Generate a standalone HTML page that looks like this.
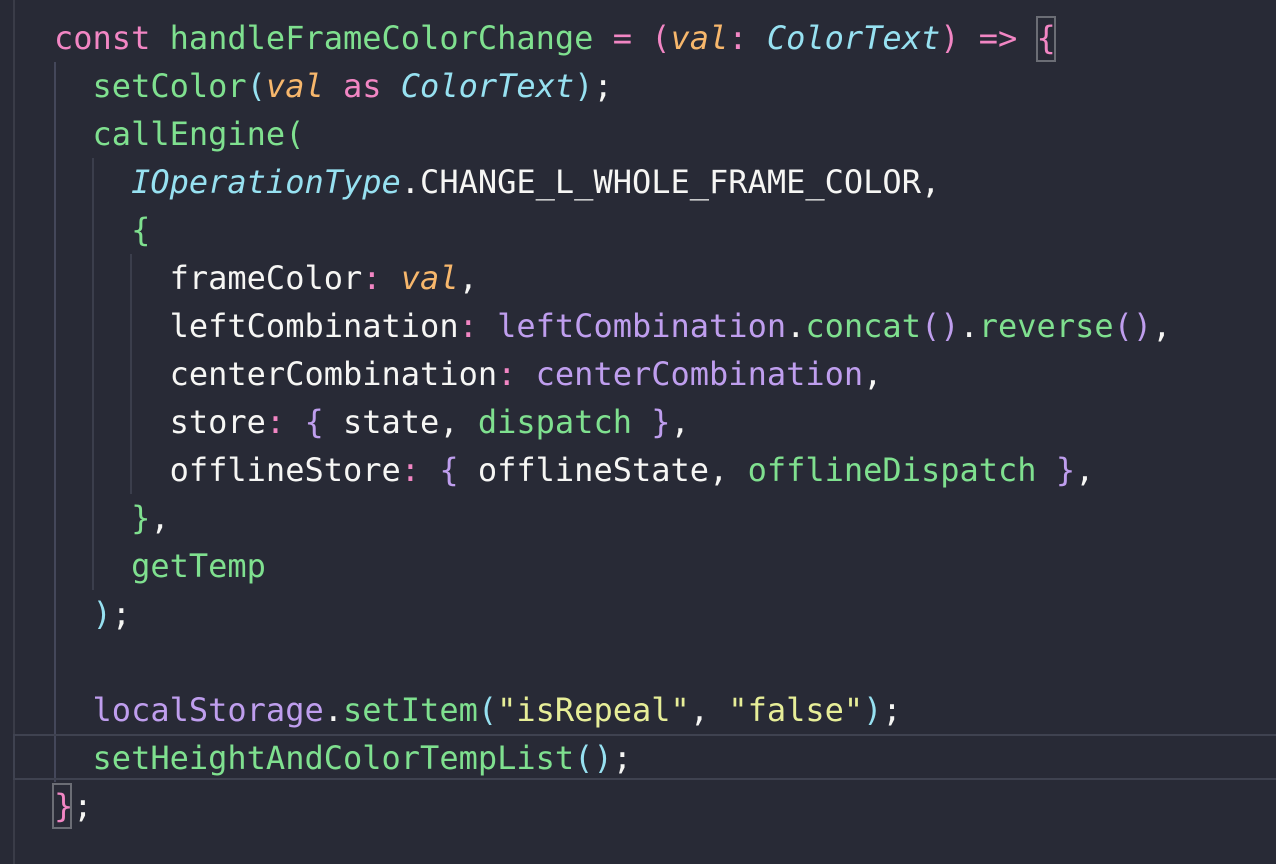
<!DOCTYPE html>
<html><head><meta charset="utf-8"><style>
html,body{margin:0;padding:0}
body{width:1276px;height:864px;background:#282a36;overflow:hidden;position:relative;font-family:"DejaVu Sans Mono","Liberation Mono",monospace;font-size:32px;color:#f6f6f4}
.l{position:absolute;left:54px;height:48px;line-height:48px;white-space:pre}
.p{color:#f286c4}.g{color:#7fe08f}.o{color:#f7b76c;font-style:italic}.c{color:#97e1f1}.ci{color:#97e1f1;font-style:italic}
.v{color:#bf9eee}.y{color:#e7ee98}
.guide{position:absolute;width:2px;background:#3b3e4c}
.box{position:absolute;border:2px solid #6b6d75;box-sizing:border-box}
</style></head><body>
<div class="guide" style="left:13px;top:0;height:864px;background:#3a3c48"></div>
<div class="guide" style="left:54px;top:62px;height:720px;background:#44475a"></div>
<div class="guide" style="left:92px;top:158px;height:432px"></div>
<div class="guide" style="left:130px;top:254px;height:240px"></div>
<div style="position:absolute;left:13px;top:734px;width:1263px;height:46px;border-top:2px solid #3f4250;border-bottom:2px solid #3f4250;box-sizing:border-box;border-left:2px solid #3f4250"></div>
<div class="box" style="left:1036px;top:16px;width:20px;height:46px"></div>
<div class="box" style="left:52px;top:783px;width:20px;height:46px"></div>

<div class="l" style="top:14px"><span class="p">const</span> <span class="g">handleFrameColorChange</span> <span class="p">=</span> <span class="p">(</span><span class="o">val</span><span class="p">:</span> <span class="ci">ColorText</span><span class="p">)</span> <span class="p">=&gt;</span> <span class="p">{</span></div>
<div class="l" style="top:62px">  <span class="g">setColor</span><span class="c">(</span><span class="o">val</span> <span class="p">as</span> <span class="ci">ColorText</span><span class="c">)</span>;</div>
<div class="l" style="top:110px">  <span class="g">callEngine(</span></div>
<div class="l" style="top:158px">    <span class="ci">IOperationType</span>.CHANGE_L_WHOLE_FRAME_COLOR,</div>
<div class="l" style="top:206px">    <span class="g">{</span></div>
<div class="l" style="top:254px">      frameColor<span class="p">:</span> <span class="o">val</span>,</div>
<div class="l" style="top:302px">      leftCombination<span class="p">:</span> <span class="v">leftCombination</span>.<span class="g">concat</span><span class="v">()</span>.<span class="g">reverse</span><span class="v">()</span>,</div>
<div class="l" style="top:350px">      centerCombination<span class="p">:</span> <span class="v">centerCombination</span>,</div>
<div class="l" style="top:398px">      store<span class="p">:</span> <span class="v">{</span> state, <span class="g">dispatch</span> <span class="v">}</span>,</div>
<div class="l" style="top:446px">      offlineStore<span class="p">:</span> <span class="v">{</span> offlineState, <span class="g">offlineDispatch</span> <span class="v">}</span>,</div>
<div class="l" style="top:494px">    <span class="g">}</span>,</div>
<div class="l" style="top:542px">    <span class="g">getTemp</span></div>
<div class="l" style="top:590px">  <span class="c">)</span>;</div>
<div class="l" style="top:686px">  <span class="v">localStorage</span>.<span class="g">setItem</span><span class="c">(</span><span class="y">"isRepeal"</span>, <span class="y">"false"</span><span class="c">)</span>;</div>
<div class="l" style="top:734px">  <span class="g">setHeightAndColorTempList</span><span class="c">()</span>;</div>
<div class="l" style="top:782px"><span class="p">}</span>;</div>
</body></html>
